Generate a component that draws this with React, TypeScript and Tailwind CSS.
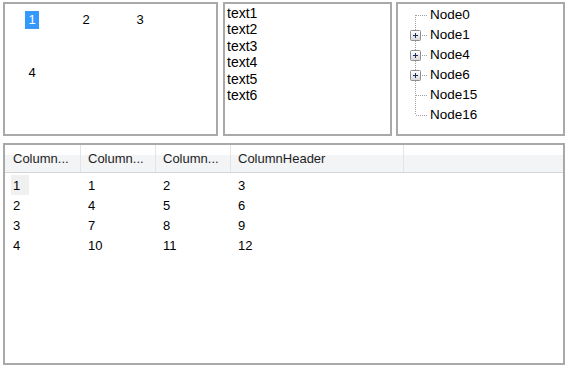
const font = "font-['Liberation_Sans',Arial,sans-serif]";

const treeNodes = [
  { label: "Node0", plus: false },
  { label: "Node1", plus: true },
  { label: "Node4", plus: true },
  { label: "Node6", plus: true },
  { label: "Node15", plus: false },
  { label: "Node16", plus: false },
];

const rows = [
  ["1", "1", "2", "3"],
  ["2", "4", "5", "6"],
  ["3", "7", "8", "9"],
  ["4", "10", "11", "12"],
];

const colWidths = ["w-[76px]", "w-[75px]", "w-[75px]", "w-[173px]"];

function TreeLines({ index, last, plus }: { index: number; last: boolean; plus: boolean }) {
  const y1 = index === 0 ? 10 : 0;
  const y2 = last ? 10 : 20;
  return (
    <svg width="32" height="20" viewBox="0 0 32 20" className="shrink-0">
      <line x1="17.5" y1={y1} x2="17.5" y2={y2} stroke="#a0a0a0" strokeDasharray="1 1" />
      <line x1="18" y1="10.5" x2="30" y2="10.5" stroke="#a0a0a0" strokeDasharray="1 1" />
      {plus && (
        <g>
          <defs>
            <linearGradient id={`pb${index}`} x1="0" y1="0" x2="0" y2="1">
              <stop offset="0" stopColor="#ffffff" />
              <stop offset="1" stopColor="#d8d8d8" />
            </linearGradient>
          </defs>
          <rect x="12.5" y="5.5" width="10" height="10" rx="1" fill={`url(#pb${index})`} stroke="#8f8f8f" />
          <line x1="15" y1="10.5" x2="20" y2="10.5" stroke="#1f2f5c" />
          <line x1="17.5" y1="8" x2="17.5" y2="13" stroke="#1f2f5c" />
        </g>
      )}
    </svg>
  );
}

export default function App() {
  return (
    <div className={`w-[569px] h-[378px] bg-white pt-[2px] pl-[3px] pr-[4px] ${font} text-black`}>
      <div className="flex h-[134px]">
        <div className="w-[215px] h-full border-2 border-[#a9a9a9] flex flex-wrap content-start text-[13px]">
          {["1", "2", "3", "4"].map((n, i) => (
            <div key={n} className="w-[54px] h-[53px] flex justify-center pt-[7px]">
              <span
                className={`h-[18px] leading-[18px] px-[3px] ${i === 0 ? "bg-[#3399ff] text-white" : ""}`}
              >
                {n}
              </span>
            </div>
          ))}
        </div>
        <div className="w-[169px] h-full ml-[5px] border-2 border-[#a9a9a9] pl-[2px] pt-[1px] text-[14px] leading-[16.4px]">
          {["text1", "text2", "text3", "text4", "text5", "text6"].map((t) => (
            <div key={t}>{t}</div>
          ))}
        </div>
        <div className="w-[169px] h-full ml-[4px] border-2 border-[#a9a9a9] pt-[1px] text-[13.5px]">
          {treeNodes.map((n, i) => (
            <div key={n.label} className="flex items-center h-[20px]">
              <TreeLines index={i} last={i === treeNodes.length - 1} plus={n.plus} />
              <span className="leading-[20px]">{n.label}</span>
            </div>
          ))}
        </div>
      </div>
      <div className="mt-[7px] h-[222px] border-2 border-[#a9a9a9] text-[13px]">
        <div className="flex h-[28px] border-b border-[#d5d5d5] bg-[linear-gradient(#ffffff_38%,#f3f4f6_38%)] text-[#1e1e1e]">
          {["Column...", "Column...", "Column...", "ColumnHeader"].map((h, i) => (
            <div
              key={i}
              className={`${colWidths[i]} shrink-0 flex items-center pl-[7px] ${i === 0 ? "pl-[8px]" : ""} border-r border-[#e3e4e6] whitespace-nowrap overflow-hidden`}
            >
              {h}
            </div>
          ))}
          <div className="flex-1" />
        </div>
        <div className="pt-[2px]">
          {rows.map((r, ri) => (
            <div key={ri} className="flex h-[20px]">
              {r.map((c, ci) => (
                <div key={ci} className={`${colWidths[ci]} shrink-0 ${ci === 0 ? "pl-[6px]" : "pl-[7px]"}`}>
                  <span
                    className={`inline-block h-[20px] pt-[2px] leading-[18px] ${ci === 0 ? "px-[2px]" : ""} ${ri === 0 && ci === 0 ? "bg-[#f0f0f0] pr-[9px]" : ""}`}
                  >
                    {c}
                  </span>
                </div>
              ))}
            </div>
          ))}
        </div>
      </div>
    </div>
  );
}
